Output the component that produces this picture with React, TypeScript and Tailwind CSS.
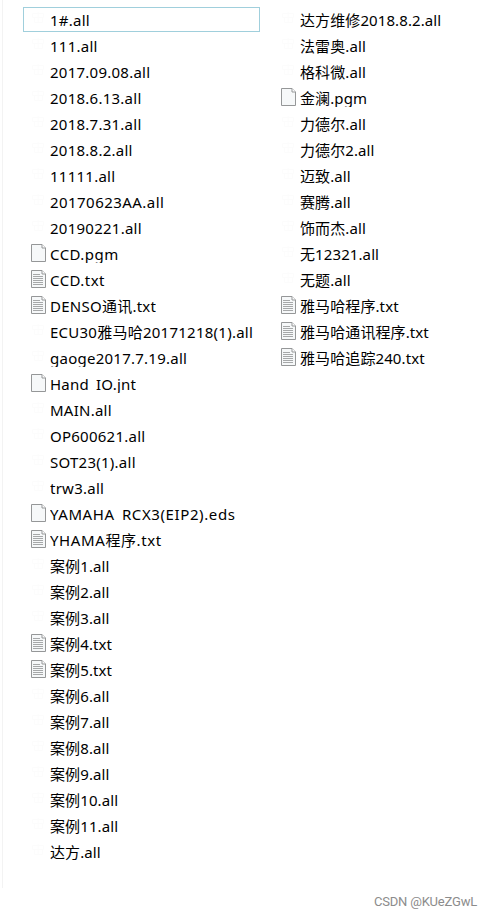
import { clsx } from "clsx";

const leftColumn = [
    "1#.all",
    "111.all",
    "2017.09.08.all",
    "2018.6.13.all",
    "2018.7.31.all",
    "2018.8.2.all",
    "11111.all",
    "20170623AA.all",
    "20190221.all",
    "CCD.pgm",
    "CCD.txt",
    "DENSO通讯.txt",
    "ECU30雅马哈20171218(1).all",
    "gaoge2017.7.19.all",
    "Hand_IO.jnt",
    "MAIN.all",
    "OP600621.all",
    "SOT23(1).all",
    "trw3.all",
    "YAMAHA_RCX3(EIP2).eds",
    "YHAMA程序.txt",
    "案例1.all",
    "案例2.all",
    "案例3.all",
    "案例4.txt",
    "案例5.txt",
    "案例6.all",
    "案例7.all",
    "案例8.all",
    "案例9.all",
    "案例10.all",
    "案例11.all",
    "达方.all",
];

const rightColumn = [
    "达方维修2018.8.2.all",
    "法雷奥.all",
    "格科微.all",
    "金澜.pgm",
    "力德尔.all",
    "力德尔2.all",
    "迈致.all",
    "赛腾.all",
    "饰而杰.all",
    "无12321.all",
    "无题.all",
    "雅马哈程序.txt",
    "雅马哈通讯程序.txt",
    "雅马哈追踪240.txt",
];

function tracking(name: string) {
    if (/^(YAMAHA|YHAMA)/.test(name)) return "tracking-[0.6px]";
    if (/^CCD|AA/.test(name)) return "tracking-[0.45px]";
    if (/^[\u4e00-\u9fff]/.test(name)) return "tracking-[0.1px]";
    return "tracking-[0.25px]";
}

function FileIcon({ name }: { name: string }) {
    // .all files have a nearly invisible white icon
    if (name.endsWith(".all")) {
        return (
            <svg width="15" height="18" viewBox="0 0 15 18" fill="none" stroke="#fcfcfc">
                <path d="M1.5 3.5h11v4h-11zM3.5 7.5v5h8v-5M7 2v11" />
            </svg>
        );
    }
    return (
        <svg width="15" height="18" viewBox="0 0 15 18" fill="none">
            <path d="M.5.5H11l3.5 3.5v13.5H.5z" fill="#f6f8f9" stroke="#959798" />
            <path d="M11 .5v3.5h3.5" fill="#fff" stroke="#959798" />
            {name.endsWith(".txt") && (
                <path
                    d="M2 4.5h7M2 6.5h10M2 8.5h10M2 10.5h10M2 12.5h10M2 14.5h10"
                    stroke="#a6a8a9"
                />
            )}
        </svg>
    );
}

// underscores fall below the visible part of the label
function FileName({ name }: { name: string }) {
    const [head, tail] = name.split("_");
    return (
        <span
            className={clsx(
                "h-[19px] overflow-hidden text-[15px] leading-[20px] whitespace-nowrap",
                tracking(name),
            )}
        >
            {head}
            {tail && <span className="text-transparent">_</span>}
            {tail}
        </span>
    );
}

function FileRow({ name, focused }: { name: string; focused?: boolean }) {
    return (
        <li className="h-[26px]">
            <div
                className={clsx(
                    "flex h-[25px] items-start gap-1 border pt-0.5 pl-[7px]",
                    focused ? "border-[#a0cfdc]" : "border-transparent",
                )}
            >
                <FileIcon name={name} />
                <FileName name={name} />
            </div>
        </li>
    );
}

export default function App() {
    return (
        <div className="flex h-[917px] w-[492px] flex-col overflow-hidden bg-white pl-0.5 font-['Noto_Sans','Noto_Sans_CJK_SC',sans-serif] text-black">
            <main className="flex h-[888px] gap-[13px] border-l border-[#f3f3f3] pt-[7px] pl-5">
                <ul className="w-[237px]">
                    {leftColumn.map((name, i) => (
                        <FileRow key={name} name={name} focused={i === 0} />
                    ))}
                </ul>
                <ul className="w-[219px]">
                    {rightColumn.map((name) => (
                        <FileRow key={name} name={name} />
                    ))}
                </ul>
            </main>
            <footer className="pt-[5px] pr-[15px] text-right font-[Roboto,sans-serif] text-[13px] leading-[18px] tracking-[-0.2px] text-[#8c8c8c]">
                CSDN @KUeZGwL
            </footer>
        </div>
    );
}
